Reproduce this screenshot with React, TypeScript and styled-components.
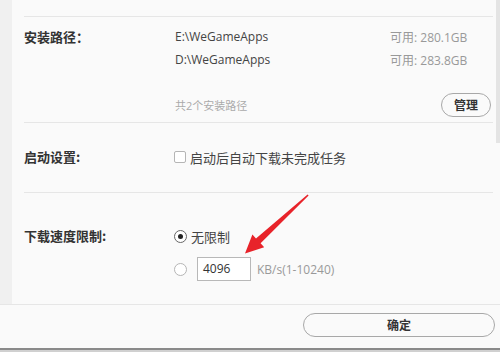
import React from "react";
import styled, { createGlobalStyle } from "styled-components";

const GlobalStyle = createGlobalStyle`
  html, body {
    margin: 0;
    padding: 0;
    background: #fafafa;
  }
  * {
    box-sizing: border-box;
  }
`;

const cjk = `"Open Sans", "Noto Sans CJK SC", sans-serif`;

const Window = styled.div`
  width: 500px;
  height: 352px;
  position: relative;
  overflow: hidden;
  background: #fafafa;
  font-family: ${cjk};
  color: #333;
  display: flex;
  flex-direction: column;
`;

const Main = styled.div`
  height: 304px;
  display: flex;
`;

const SideStrip = styled.div`
  width: 12px;
  background: #f0f0f0;
`;

const Panel = styled.div`
  flex: 1;
  margin-left: 12px;
  margin-right: 3px;
  display: flex;
  flex-direction: column;
  padding-top: 16px;
`;

const ScrollTrack = styled.div`
  width: 4px;
  margin-right: 0;
  display: flex;
  flex-direction: column;
`;

const ScrollThumb = styled.div`
  height: 143px;
  background: #e4e4e4;
`;

const Section = styled.div<{ $height: number; $pad: number }>`
  height: ${(p) => p.$height}px;
  border-top: 1px solid #e6e6e6;
  display: flex;
  padding-top: ${(p) => p.$pad}px;
`;

const Label = styled.div<{ $lh: number }>`
  width: 151px;
  font-size: 13px;
  font-weight: 700;
  color: #333;
  line-height: ${(p) => p.$lh}px;
  height: ${(p) => p.$lh}px;
  font-family: "Noto Sans CJK SC", sans-serif;
`;

const Body = styled.div`
  flex: 1;
  display: flex;
  flex-direction: column;
`;

const PathRow = styled.div`
  height: 23px;
  display: flex;
  align-items: center;
  font-size: 12px;
`;

const PathText = styled.span`
  width: 215px;
  color: #444;
`;

const FreeText = styled.span`
  color: #999;
`;

const SummaryRow = styled.div`
  margin-top: 22px;
  height: 24px;
  display: flex;
  align-items: center;
  justify-content: space-between;
  padding-right: 2px;
`;

const Hint = styled.span`
  font-size: 11px;
  color: #aaa;
`;

const PillButton = styled.button<{ $width: number }>`
  width: ${(p) => p.$width}px;
  height: 24px;
  border: 1px solid #a8a8a8;
  border-radius: 12px;
  background: #fafafa;
  font-family: "Noto Sans CJK SC", sans-serif;
  font-size: 12px;
  font-weight: 700;
  color: #333;
  padding: 0;
  line-height: 22px;
`;

const OptionRow = styled.div<{ $h: number; $mt?: number }>`
  height: ${(p) => p.$h}px;
  margin-top: ${(p) => p.$mt ?? 0}px;
  display: flex;
  align-items: center;
  font-size: 13px;
  color: #444;
  font-family: "Noto Sans CJK SC", sans-serif;
`;

const CheckBox = styled.span`
  width: 12px;
  height: 12px;
  border: 1px solid #b5b5b5;
  border-radius: 2px;
  background: #fff;
  margin-left: -1px;
  margin-right: 4px;
`;

const Radio = styled.span<{ $on?: boolean }>`
  width: 13px;
  height: 13px;
  border-radius: 50%;
  border: 1px solid ${(p) => (p.$on ? "#666" : "#b5b5b5")};
  background: #fff;
  margin-left: -1px;
  margin-right: 4px;
  display: flex;
  align-items: center;
  justify-content: center;
  &::after {
    content: "";
    width: 5px;
    height: 5px;
    border-radius: 50%;
    background: ${(p) => (p.$on ? "#222" : "transparent")};
  }
`;

const SpeedInput = styled.div`
  width: 54px;
  height: 24px;
  margin-left: 6px;
  border: 1px solid #b8b8b8;
  background: #fff;
  font-family: "Open Sans", sans-serif;
  font-size: 12px;
  color: #333;
  line-height: 22px;
  padding-left: 5px;
`;

const Unit = styled.span`
  margin-left: 6px;
  font-family: "Open Sans", sans-serif;
  font-size: 12px;
  color: #999;
`;

const Footer = styled.div`
  flex: 1;
  border-top: 1px solid #e6e6e6;
  display: flex;
  flex-direction: column;
`;

const FooterBar = styled.div`
  flex: 1;
  display: flex;
  justify-content: flex-end;
  padding: 8px 5px 0 0;
`;

const BottomEdge = styled.div`
  height: 4px;
  border-top: 2px solid #8a8a8a;
  background: #d0d0d0;
`;

const ArrowLayer = styled.svg`
  position: absolute;
  left: 0;
  top: 0;
  pointer-events: none;
`;

export default function App() {
  return (
    <>
      <GlobalStyle />
      <Window>
        <Main>
          <SideStrip />
          <Panel>
            <Section $height={106} $pad={8}>
              <Label $lh={23}>安装路径：</Label>
              <Body>
                <PathRow>
                  <PathText>E:\WeGameApps</PathText>
                  <FreeText>可用: 280.1GB</FreeText>
                </PathRow>
                <PathRow>
                  <PathText>D:\WeGameApps</PathText>
                  <FreeText>可用: 283.8GB</FreeText>
                </PathRow>
                <SummaryRow>
                  <Hint>共2个安装路径</Hint>
                  <PillButton $width={50}>管理</PillButton>
                </SummaryRow>
              </Body>
            </Section>
            <Section $height={70} $pad={23}>
              <Label $lh={22}>启动设置:</Label>
              <Body>
                <OptionRow $h={22}>
                  <CheckBox />
                  启动后自动下载未完成任务
                </OptionRow>
              </Body>
            </Section>
            <Section $height={112} $pad={32}>
              <Label $lh={22}>下载速度限制:</Label>
              <Body>
                <OptionRow $h={22}>
                  <Radio $on />
                  无限制
                </OptionRow>
                <OptionRow $h={24} $mt={10}>
                  <Radio />
                  <SpeedInput>4096</SpeedInput>
                  <Unit>KB/s(1-10240)</Unit>
                </OptionRow>
              </Body>
            </Section>
          </Panel>
          <ScrollTrack>
            <ScrollThumb />
          </ScrollTrack>
        </Main>
        <Footer>
          <FooterBar>
            <PillButton $width={192}>确定</PillButton>
          </FooterBar>
          <BottomEdge />
        </Footer>
        <ArrowLayer width="500" height="352" viewBox="0 0 500 352">
          <polygon
            points="308.6,195.6 260.6,243.2 264.2,247.2 245,253.5 252.4,234.4 256,238.4 307.6,194.4"
            fill="#e8232a"
          />
        </ArrowLayer>
      </Window>
    </>
  );
}
